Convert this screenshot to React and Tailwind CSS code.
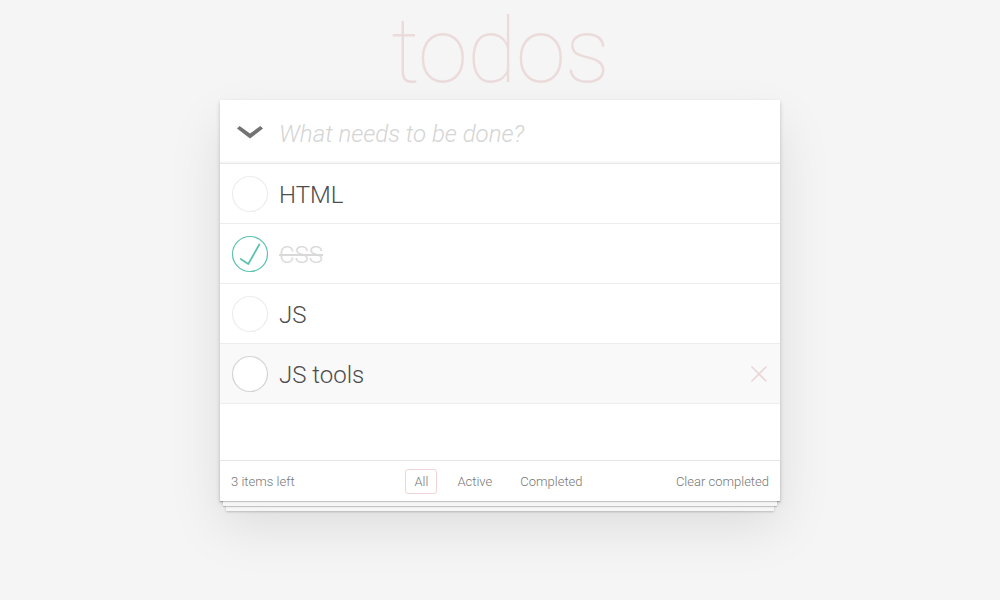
import React from "react";

const font = { fontFamily: "Roboto, 'Liberation Sans', sans-serif" };

function Circle({ checked, hover }) {
  return (
    <svg width="40" height="40" viewBox="0 0 40 40" className="shrink-0">
      <circle
        cx="20"
        cy="20"
        r="17.5"
        fill="white"
        stroke={checked ? "#5dc2af" : hover ? "#d4d4d4" : "#ededed"}
        strokeWidth="1.2"
      />
      {checked && (
        <path
          d="M10.7 25.5 L18.3 30.5 L29.3 11"
          fill="none"
          stroke="#5dc2af"
          strokeWidth="1.8"
          strokeLinecap="round"
          strokeLinejoin="round"
          transform="translate(0,-0.5)"
        />
      )}
    </svg>
  );
}

function Row({ text, done, hover }) {
  return (
    <li
      className={`flex items-center h-[60px] border-b border-[#ededed] pl-[10px] pr-[11px] ${
        hover ? "bg-[#f9f9f9]" : "bg-white"
      }`}
    >
      <Circle checked={done} hover={hover} />
      <span
        className={`ml-[9px] flex-1 text-[24px] font-light pt-[2px] ${
          done ? "text-[#d9d9d9] line-through" : "text-[#4d4d4d]"
        }`}
      >
        {text}
      </span>
      {hover && (
        <svg width="20" height="20" viewBox="0 0 20 20">
          <path d="M2.5 2.5 L17.5 17.5 M17.5 2.5 L2.5 17.5" stroke="#ead6d6" strokeWidth="1.6" />
        </svg>
      )}
    </li>
  );
}

export default function App() {
  return (
    <div className="min-h-[600px] bg-[#f5f5f5] flex flex-col items-center" style={font}>
      <h1 className="h-[100px] w-full text-center text-[91px] font-thin leading-[102px] text-[rgba(175,47,47,0.13)] tracking-[-1px]">
        todos
      </h1>
      <section className="w-[560px] bg-white shadow-[0_2px_4px_0_rgba(0,0,0,0.2),0_25px_50px_0_rgba(0,0,0,0.1)]">
        <header className="flex items-center h-[64px] border-b border-[#e6e6e6] shadow-[inset_0_-2px_1px_rgba(0,0,0,0.03)]">
          <svg width="26" height="14" viewBox="0 0 26 14" className="ml-[17px] mt-[2px]">
            <polygon points="0,2.5 2.6,0 13,7.5 23.4,0 26,2.5 13,12.5" fill="#737373" />
          </svg>
          <span className="ml-[16px] text-[24px] italic font-light text-[#d4d4d4] pt-[4px]">
            What needs to be done?
          </span>
        </header>
        <ul>
          <Row text="HTML" />
          <Row text="CSS" done />
          <Row text="JS" />
          <Row text="JS tools" hover />
        </ul>
        <div className="h-[56px]" />
        <footer className="grid grid-cols-[1fr_auto_1fr] items-center h-[41px] border-t border-[#e6e6e6] px-[11px] text-[13px] font-light text-[#777] shadow-[0_1px_1px_rgba(0,0,0,0.2),0_8px_0_-3px_#f6f6f6,0_9px_1px_-3px_rgba(0,0,0,0.2),0_16px_0_-6px_#f6f6f6,0_17px_2px_-6px_rgba(0,0,0,0.2)]">
          <span className="pt-[1px]">3 items left</span>
          <div className="flex items-center gap-[12px] -ml-[4px] pt-[1px]">
            <span className="px-[8px] py-[2px] border border-[rgba(175,47,47,0.2)] rounded-[3px]">All</span>
            <span className="px-[7px] py-[2px] border border-transparent">Active</span>
            <span className="px-[7px] py-[2px] border border-transparent">Completed</span>
          </div>
          <span className="text-right pt-[1px]">Clear completed</span>
        </footer>
      </section>
    </div>
  );
}
